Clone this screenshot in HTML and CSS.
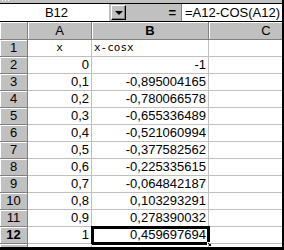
FILE: index.html
```html
<!DOCTYPE html>
<html lang="en">
<head>
    <meta charset="UTF-8">
    <title>x-cosx</title>
    <link rel="stylesheet" href="styles.css">
</head>
<body>
    <div class="window">
        <div class="strip"><span class="grip"></span></div>

        <div class="formula-bar">
            <div class="name-box">B12</div>
            <div class="drop-btn"><span class="arrow"></span></div>
            <div class="equals">=</div>
            <div class="formula">=A12-COS(A12)</div>
        </div>

        <div class="sheet" id="sheet">
            <div class="corner"></div>
            <div class="col-head">A</div>
            <div class="col-head active">B</div>
            <div class="col-head">C</div>
        </div>
    </div>

    <script>
        // rows of the sheet: x and x - cos(x)
        const rows = [
            ['x', 'x-cosx'],
            ['0', '-1'],
            ['0,1', '-0,895004165'],
            ['0,2', '-0,780066578'],
            ['0,3', '-0,655336489'],
            ['0,4', '-0,521060994'],
            ['0,5', '-0,377582562'],
            ['0,6', '-0,225335615'],
            ['0,7', '-0,064842187'],
            ['0,8', '0,103293291'],
            ['0,9', '0,278390032'],
            ['1', '0,459697694'],
            ['', '']
        ];

        const sheet = document.getElementById('sheet');
        rows.forEach((row, i) => {
            const n = i + 1;
            const label = n === 1 ? 'text' : 'num';
            sheet.innerHTML += `
                <div class="row-head${n === 12 ? ' active' : ''}">${n}</div>
                <div class="cell ${n === 1 ? 'center' : 'num'}">${row[0]}</div>
                <div class="cell ${label}${n === 1 ? ' mono' : ''}${n === 12 ? ' selected' : ''}">${row[1]}${n === 12 ? '<span class="handle"></span>' : ''}</div>
                <div class="cell"></div>
            `;
        });
    </script>
</body>
</html>
```

FILE: styles.css
```css
* {
    margin: 0;
    padding: 0;
    box-sizing: border-box;
}

body {
    background: #c0c0c0;
    font-family: "Liberation Sans", Arial, sans-serif;
    font-size: 13px;
    color: #000;
}

.window {
    width: 284px;
    height: 250px;
    overflow: hidden;
    border-right: 2px solid #000;
    border-bottom: 3px solid #000;
    background: #c0c0c0;
}

.strip {
    height: 3px;
    position: relative;
}

.grip {
    position: absolute;
    left: 2px;
    top: 0;
    width: 7px;
    height: 1px;
    background: repeating-linear-gradient(90deg, #fff 0 1px, transparent 1px 3px);
}

.formula-bar {
    display: flex;
    height: 19px;
    border-top: 1px solid #000;
    border-bottom: 1px solid #000;
    background: #c0c0c0;
}

.name-box {
    width: 109px;
    background: #fff;
    text-align: center;
    line-height: 17px;
    padding-left: 4px;
}

.drop-btn {
    width: 15px;
    height: 15px;
    margin: 1px 0 0 2px;
    border: 1px solid;
    border-color: #fff #000 #000 #fff;
    box-shadow: inset -1px -1px 0 #808080;
    display: flex;
    align-items: center;
    justify-content: center;
}

.arrow {
    width: 0;
    height: 0;
    border-left: 4px solid transparent;
    border-right: 4px solid transparent;
    border-top: 4px solid #000;
}

.equals {
    width: 55px;
    text-align: right;
    padding-right: 5px;
    font-weight: bold;
    line-height: 17px;
}

.formula {
    flex: 1;
    background: #fff;
    line-height: 17px;
    padding-left: 3px;
    white-space: nowrap;
    border-left: 1px solid #808080;
}

.sheet {
    display: grid;
    grid-template-columns: 28px 64px 117px 115px;
    grid-auto-rows: 17px;
    grid-template-rows: 18px;
    background: #fff;
}

.corner,
.col-head,
.row-head {
    background: #c0c0c0;
    border-right: 1px solid #808080;
    border-bottom: 1px solid #808080;
    box-shadow: inset 1px 1px 0 #fff;
    text-align: center;
    line-height: 16px;
}

.col-head {
    line-height: 17px;
}

.col-head.active,
.row-head.active {
    font-weight: bold;
}

.cell {
    border-right: 1px solid #c0c0c0;
    border-bottom: 1px solid #c0c0c0;
    line-height: 16px;
    padding: 0 2px;
    white-space: nowrap;
    position: relative;
}

.cell.num {
    text-align: right;
}

.cell.center {
    text-align: center;
    font-family: "DejaVu Sans Mono", monospace;
    font-size: 11px;
}

.cell.mono {
    font-family: "DejaVu Sans Mono", monospace;
    font-size: 11px;
}

.cell.selected {
    outline: 3px solid #000;
    outline-offset: -2px;
}

.handle {
    position: absolute;
    right: -4px;
    bottom: -4px;
    width: 5px;
    height: 5px;
    background: #000;
    border: 1px solid #fff;
}
```
